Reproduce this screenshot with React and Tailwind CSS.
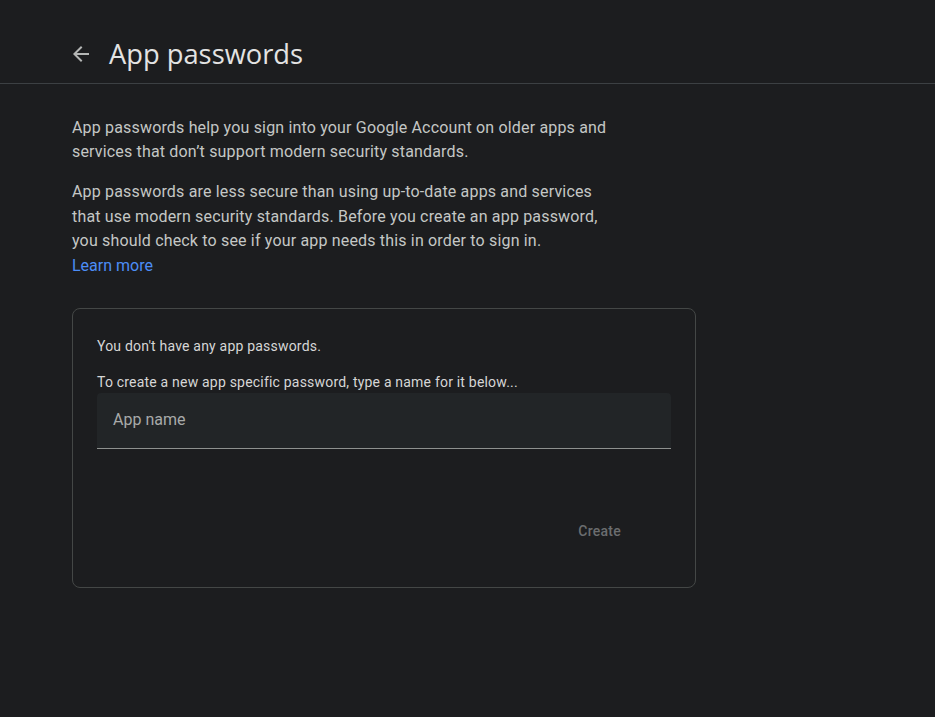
const ArrowBack = () => (
  <svg width="24" height="24" viewBox="0 0 24 24" fill="currentColor">
    <path d="M20 11H7.83l5.59-5.59L12 4l-8 8 8 8 1.41-1.41L7.83 13H20v-2z" />
  </svg>
);

export default function App() {
  return (
    <div className="min-h-screen bg-[#1c1d1f] text-[#e3e3e3]" style={{ fontFamily: 'Roboto, "Liberation Sans", sans-serif' }}>
      <header className="h-[84px] border-b border-[#3c4043] flex items-end pb-[11px] pl-[69px]">
        <div className="h-[36px] flex items-center">
          <button className="text-[#b4b6b5] w-[24px] h-[24px] flex items-center justify-center">
            <ArrowBack />
          </button>
          <h1
            className="ml-[16px] text-[27.3px] leading-[36px] text-[#e3e3e3]"
            style={{ fontFamily: '"Open Sans", sans-serif' }}
          >
            App passwords
          </h1>
        </div>
      </header>

      <main className="pl-[72px] pt-[32px]">
        <div className="w-[548px] text-[16px] leading-[24px] tracking-[0.17px] text-[#c4c7c5]">
          <p>
            App passwords help you sign into your Google Account on older apps and services that don’t support modern
            security standards.
          </p>
          <p className="mt-[16px] leading-[24.5px]">
            App passwords are less secure than using up-to-date apps and services that use modern security standards.
            Before you create an app password, you should check to see if your app needs this in order to sign in.
          </p>
          <a className="text-[#4c8df6] block tracking-normal">Learn more</a>
        </div>

        <section className="mt-[30px] w-[624px] h-[280px] border border-[#444746] rounded-[8px] px-[24px] pt-[27px]">
          <p className="text-[14px] leading-[20px] tracking-[0.2px] text-[#d6d6d6]">You don't have any app passwords.</p>
          <p className="mt-[16px] text-[14px] leading-[20px] tracking-[0.2px] text-[#d6d6d6]">
            To create a new app specific password, type a name for it below...
          </p>
          <div className="mt-[1px] h-[56px] bg-[#222527] border-b border-[#8e918f] rounded-t-[4px] flex items-center px-[16px]">
            <span className="text-[16px] text-[#a8aaa9]">App name</span>
          </div>
          <div className="flex justify-end mt-[63px] pr-[38px]">
            <button className="text-[14px] font-medium tracking-[0.25px] text-[#6b6d6f] px-[12px] h-[40px]">Create</button>
          </div>
        </section>
      </main>
    </div>
  );
}
